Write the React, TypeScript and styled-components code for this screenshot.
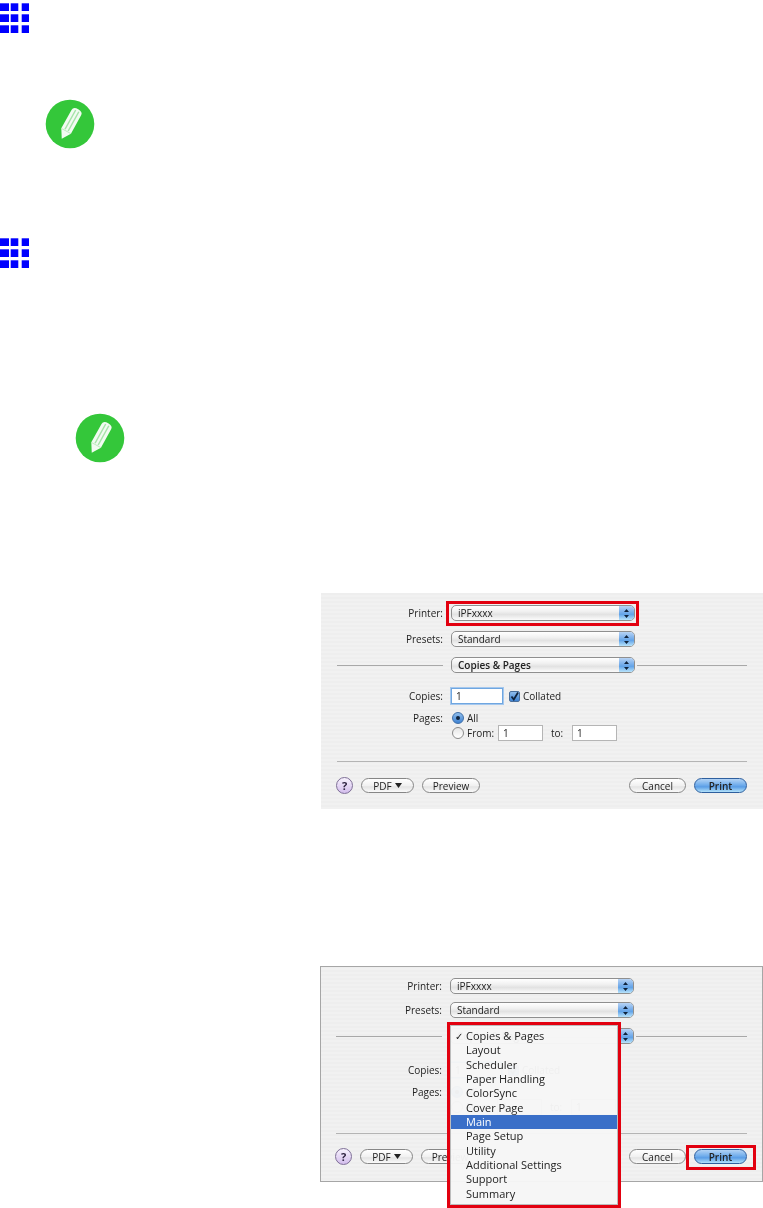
import React from 'react';
import styled, { createGlobalStyle } from 'styled-components';

const GlobalStyle = createGlobalStyle`
  html, body {
    margin: 0;
    padding: 0;
    background: #ffffff;
  }
  body {
    font-family: 'Open Sans', 'DejaVu Sans', sans-serif;
    overflow: hidden;
  }
`;

const Page = styled.div`
  width: 763px;
  height: 1208px;
  display: flex;
  flex-direction: column;
  align-items: flex-start;
`;

const HeadingMark = styled.svg<{ $top: number }>`
  display: block;
  width: 29px;
  height: 30px;
  margin-top: ${p => p.$top}px;
  filter: blur(0.4px);
`;

const NoteMark = styled.svg<{ $top: number; $left: number }>`
  display: block;
  width: 50px;
  height: 50px;
  margin-top: ${p => p.$top}px;
  margin-left: ${p => p.$left}px;
  filter: blur(0.7px);
`;

const Dialog = styled.div<{ $top: number; $left: number; $framed?: boolean }>`
  position: relative;
  box-sizing: border-box;
  width: ${p => 763 - p.$left}px;
  height: 216px;
  margin-top: ${p => p.$top}px;
  margin-left: ${p => p.$left}px;
  padding-top: 12px;
  display: flex;
  flex-direction: column;
  background: repeating-linear-gradient(180deg, #eeeeee 0 2px, #f1f1f1 2px 4px);
  box-shadow: ${p => (p.$framed ? 'inset 0 0 0 1px #a6a6a6' : 'none')};
  color: #222222;
  font-size: 10px;
  line-height: 14px;
`;

const Blurred = styled.div`
  display: flex;
  flex-direction: column;
  filter: blur(0.4px);
`;

const Row = styled.div<{ $top?: number }>`
  display: flex;
  align-items: center;
  height: 16px;
  margin-top: ${p => p.$top ?? 0}px;
`;

const Label = styled.span`
  width: 122px;
  flex: none;
  text-align: right;
`;

const Popup = styled.div<{ $strong?: boolean }>`
  position: relative;
  box-sizing: border-box;
  width: 184px;
  height: 16px;
  margin-left: 8px;
  padding-left: 6px;
  flex: none;
  display: flex;
  align-items: center;
  border: 1px solid #8f8f8f;
  border-radius: 5px;
  background: linear-gradient(180deg, #ffffff 0%, #f0f0f0 40%, #e2e2e2 60%, #fbfbfb 100%);
  font-weight: ${p => (p.$strong ? 600 : 400)};
  overflow: hidden;
`;

const PopupCap = styled.span`
  position: absolute;
  top: 0;
  right: 0;
  bottom: 0;
  width: 15px;
  display: flex;
  align-items: center;
  justify-content: center;
  background: linear-gradient(180deg, #b7d3f4 0%, #7fb2ec 40%, #62a3e8 60%, #b9e4fb 100%);
`;

const RedBox = styled.span<{ $place: 'printer' | 'print' }>`
  position: absolute;
  box-sizing: border-box;
  height: 25px;
  border: 3px solid #e2000f;
  top: ${p => (p.$place === 'printer' ? 8 : 179)}px;
  left: ${p => (p.$place === 'printer' ? 125 : 366)}px;
  width: ${p => (p.$place === 'printer' ? 193 : 70)}px;
  pointer-events: none;
`;

const DividerRow = styled(Row)`
  padding-left: 16px;
  padding-right: 16px;
`;

const Rule = styled.span<{ $width?: number }>`
  display: block;
  height: 1px;
  background: #a8a8a8;
  flex: ${p => (p.$width ? `0 0 ${p.$width}px` : '1 1 auto')};
`;

const DividerPopup = styled(Popup)`
  margin-right: 2px;
`;

const TextField = styled.div<{ $width: number; $focused?: boolean }>`
  box-sizing: border-box;
  width: ${p => p.$width}px;
  height: 16px;
  flex: none;
  padding-left: 4px;
  background: #ffffff;
  border: 1px solid ${p => (p.$focused ? '#6fa6e0' : '#b5b5b5')};
  box-shadow: ${p => (p.$focused ? '0 0 0 1px #a5c8ee' : 'none')};
  line-height: 14px;
`;

const CopiesField = styled(TextField)`
  margin-left: 8px;
`;

const CheckBox = styled.span`
  box-sizing: border-box;
  width: 11px;
  height: 11px;
  margin-left: 6px;
  margin-right: 3px;
  flex: none;
  display: flex;
  border: 1px solid #4a6f9c;
  border-radius: 2px;
  background: linear-gradient(180deg, #8fbdec, #3e82d2);
`;

const Radio = styled.span<{ $on?: boolean }>`
  box-sizing: border-box;
  width: 12px;
  height: 12px;
  margin-left: 9px;
  margin-right: 3px;
  flex: none;
  display: flex;
  align-items: center;
  justify-content: center;
  border: 1px solid ${p => (p.$on ? '#3f6ea6' : '#8a8a8a')};
  border-radius: 50%;
  background: ${p => (p.$on ? 'linear-gradient(180deg, #8fbdec, #3e82d2)' : 'linear-gradient(180deg, #e6e6e6, #ffffff)')};
  &::after {
    content: '';
    display: ${p => (p.$on ? 'block' : 'none')};
    width: 4px;
    height: 4px;
    border-radius: 50%;
    background: #10233c;
  }
`;

const PageRow = styled.div<{ $top?: number }>`
  display: flex;
  align-items: center;
  height: 13px;
  margin-top: ${p => p.$top ?? 0}px;
`;

const FromText = styled.span`
  width: 31px;
  flex: none;
`;

const ToText = styled.span`
  width: 29px;
  padding-left: 8px;
  box-sizing: border-box;
  flex: none;
`;

const FromRow = styled(Row)`
  padding-left: 122px;
`;

const Separator = styled.div<{ $top: number }>`
  height: 1px;
  margin: ${p => p.$top}px 16px 0;
  background: #b4b4b4;
`;

const Footer = styled.div<{ $top: number }>`
  display: flex;
  align-items: center;
  height: 15px;
  margin-top: ${p => p.$top}px;
  padding: 0 16px 0 15px;
`;

const HelpButton = styled.span`
  box-sizing: border-box;
  width: 17px;
  height: 17px;
  flex: none;
  margin-right: 8px;
  display: flex;
  align-items: center;
  justify-content: center;
  border: 1px solid #7d6e96;
  border-radius: 50%;
  background: linear-gradient(180deg, #f7f2fd, #d3bdec);
  color: #2a1f3c;
  font-weight: 700;
  font-size: 11px;
`;

const PillButton = styled.span<{ $width: number; $primary?: boolean }>`
  box-sizing: border-box;
  width: ${p => p.$width}px;
  height: 15px;
  flex: none;
  display: flex;
  align-items: center;
  justify-content: center;
  gap: 3px;
  border: 1px solid ${p => (p.$primary ? '#2e5f9e' : '#868686')};
  border-radius: 8px;
  background: ${p =>
    p.$primary
      ? 'linear-gradient(180deg, #b3d3f5 0%, #72aeec 45%, #5a9de6 60%, #b3e2fa 100%)'
      : 'linear-gradient(180deg, #ffffff 0%, #f1f1f1 50%, #e4e4e4 60%, #fafafa 100%)'};
  font-size: 10px;
  font-weight: ${p => (p.$primary ? 600 : 400)};
`;

const PreviewButton = styled(PillButton)`
  margin-left: 8px;
`;

const Spacer = styled.span`
  flex: 1 1 auto;
`;

const CancelButton = styled(PillButton)`
  margin-right: 8px;
`;

const MenuFrame = styled.div`
  position: absolute;
  left: 127px;
  top: 56px;
  box-sizing: border-box;
  width: 174px;
  height: 186px;
  border: 3px solid #e2000f;
  z-index: 2;
`;

const Menu = styled.ul`
  box-sizing: border-box;
  height: 100%;
  margin: 0;
  padding: 3px 0 0;
  list-style: none;
  border: 1px solid #bcbcbc;
  background: rgba(246, 246, 246, 0.97);
  font-size: 11px;
  filter: blur(0.35px);
`;

const MenuItem = styled.li<{ $active?: boolean }>`
  position: relative;
  height: 14.35px;
  line-height: 14.35px;
  padding-left: 15px;
  color: ${p => (p.$active ? '#ffffff' : '#222222')};
  background: ${p => (p.$active ? '#3a6fc8' : 'transparent')};
`;

const Tick = styled.span`
  position: absolute;
  left: 4px;
  top: 0;
  font-size: 10px;
`;

function HeadingIcon({ top }: { top: number }) {
  const cells = [-2, 10.7, 21.7];
  const rows = [0.3, 11.3, 22.3];
  return (
    <HeadingMark $top={top} viewBox="0 0 29 30">
      {rows.map(y =>
        cells.map((x, i) => (
          <rect key={`${x}-${y}`} x={x} y={y} width={i === 0 ? 11 : 7.6} height={7.7} fill="#0000ff" />
        ))
      )}
    </HeadingMark>
  );
}

function NoteIcon({ top, left }: { top: number; left: number }) {
  return (
    <NoteMark $top={top} $left={left} viewBox="0 0 50 50">
      <circle cx="25" cy="25" r="24.3" fill="#34c73a" />
      <g transform="rotate(29 25 25)">
        <path d="M19.5 12 Q19.5 8 25 8 Q30.5 8 30.5 12 V33 L25 42 L19.5 33 Z" fill="#f2fbf2" />
        <path d="M23.2 10 V32 M26.8 10 V32" stroke="#a6e4a9" strokeWidth="1.5" fill="none" />
        <path d="M19.5 33 H30.5" stroke="#bdeabf" strokeWidth="1" fill="none" />
      </g>
    </NoteMark>
  );
}

function Stepper() {
  return (
    <PopupCap>
      <svg width="7" height="11" viewBox="0 0 7 11">
        <path d="M3.5 1 L6 4 H1 Z M3.5 10 L1 7 H6 Z" fill="#10233c" />
      </svg>
    </PopupCap>
  );
}

type Spacing = { presets: number; divider: number; copies: number; pages: number; from: number; sep: number; footer: number };

function PrintDialog({ top, left, framed, spacing, mark, menu }: {
  top: number;
  left: number;
  framed?: boolean;
  spacing: Spacing;
  mark: 'printer' | 'print';
  menu?: React.ReactNode;
}) {
  return (
    <Dialog $top={top} $left={left} $framed={framed}>
      <Blurred>
        <Row>
          <Label>Printer:</Label>
          <Popup>iPFxxxx<Stepper /></Popup>
        </Row>
        <Row $top={spacing.presets}>
          <Label>Presets:</Label>
          <Popup>Standard<Stepper /></Popup>
        </Row>
        <DividerRow $top={spacing.divider}>
          <Rule $width={106} />
          <DividerPopup $strong>Copies &amp; Pages<Stepper /></DividerPopup>
          <Rule />
        </DividerRow>
        <Row $top={spacing.copies}>
          <Label>Copies:</Label>
          <CopiesField $width={52} $focused>1</CopiesField>
          <CheckBox>
            <svg width="9" height="9" viewBox="0 0 9 9">
              <path d="M1.5 4.5 L3.8 7.5 L8 0.5" stroke="#10233c" strokeWidth="1.8" fill="none" />
            </svg>
          </CheckBox>
          Collated
        </Row>
        <PageRow $top={spacing.pages}>
          <Label>Pages:</Label>
          <Radio $on />
          All
        </PageRow>
        <FromRow $top={spacing.from}>
          <Radio />
          <FromText>From:</FromText>
          <TextField $width={45}>1</TextField>
          <ToText>to:</ToText>
          <TextField $width={45}>1</TextField>
        </FromRow>
        <Separator $top={spacing.sep} />
        <Footer $top={spacing.footer}>
          <HelpButton>?</HelpButton>
          <PillButton $width={53}>
            PDF
            <svg width="7" height="5" viewBox="0 0 7 5"><path d="M0 0 H7 L3.5 5 Z" fill="#222222" /></svg>
          </PillButton>
          <PreviewButton $width={58}>Preview</PreviewButton>
          <Spacer />
          <CancelButton $width={57}>Cancel</CancelButton>
          <PillButton $width={53} $primary>Print</PillButton>
        </Footer>
      </Blurred>
      <RedBox $place={mark} />
      {menu}
    </Dialog>
  );
}

const menuItems = [
  'Copies & Pages', 'Layout', 'Scheduler', 'Paper Handling', 'ColorSync', 'Cover Page',
  'Main', 'Page Setup', 'Utility', 'Additional Settings', 'Support', 'Summary'
];

export default function App() {
  return (
    <Page>
      <GlobalStyle />
      <HeadingIcon top={3} />
      <NoteIcon top={66} left={45} />
      <HeadingIcon top={89} />
      <NoteIcon top={145} left={75} />
      <PrintDialog
        top={130}
        left={321}
        mark="printer"
        spacing={{ presets: 10, divider: 10, copies: 15, pages: 7, from: 1, sep: 20, footer: 16 }}
      />
      <PrintDialog
        top={157}
        left={320}
        framed
        mark="print"
        spacing={{ presets: 8, divider: 10, copies: 18, pages: 7, from: 1, sep: 18, footer: 15 }}
        menu={
          <MenuFrame>
            <Menu>
              {menuItems.map(item => (
                <MenuItem key={item} $active={item === 'Main'}>
                  {item === 'Copies & Pages' && <Tick>✓</Tick>}
                  {item}
                </MenuItem>
              ))}
            </Menu>
          </MenuFrame>
        }
      />
    </Page>
  );
}
